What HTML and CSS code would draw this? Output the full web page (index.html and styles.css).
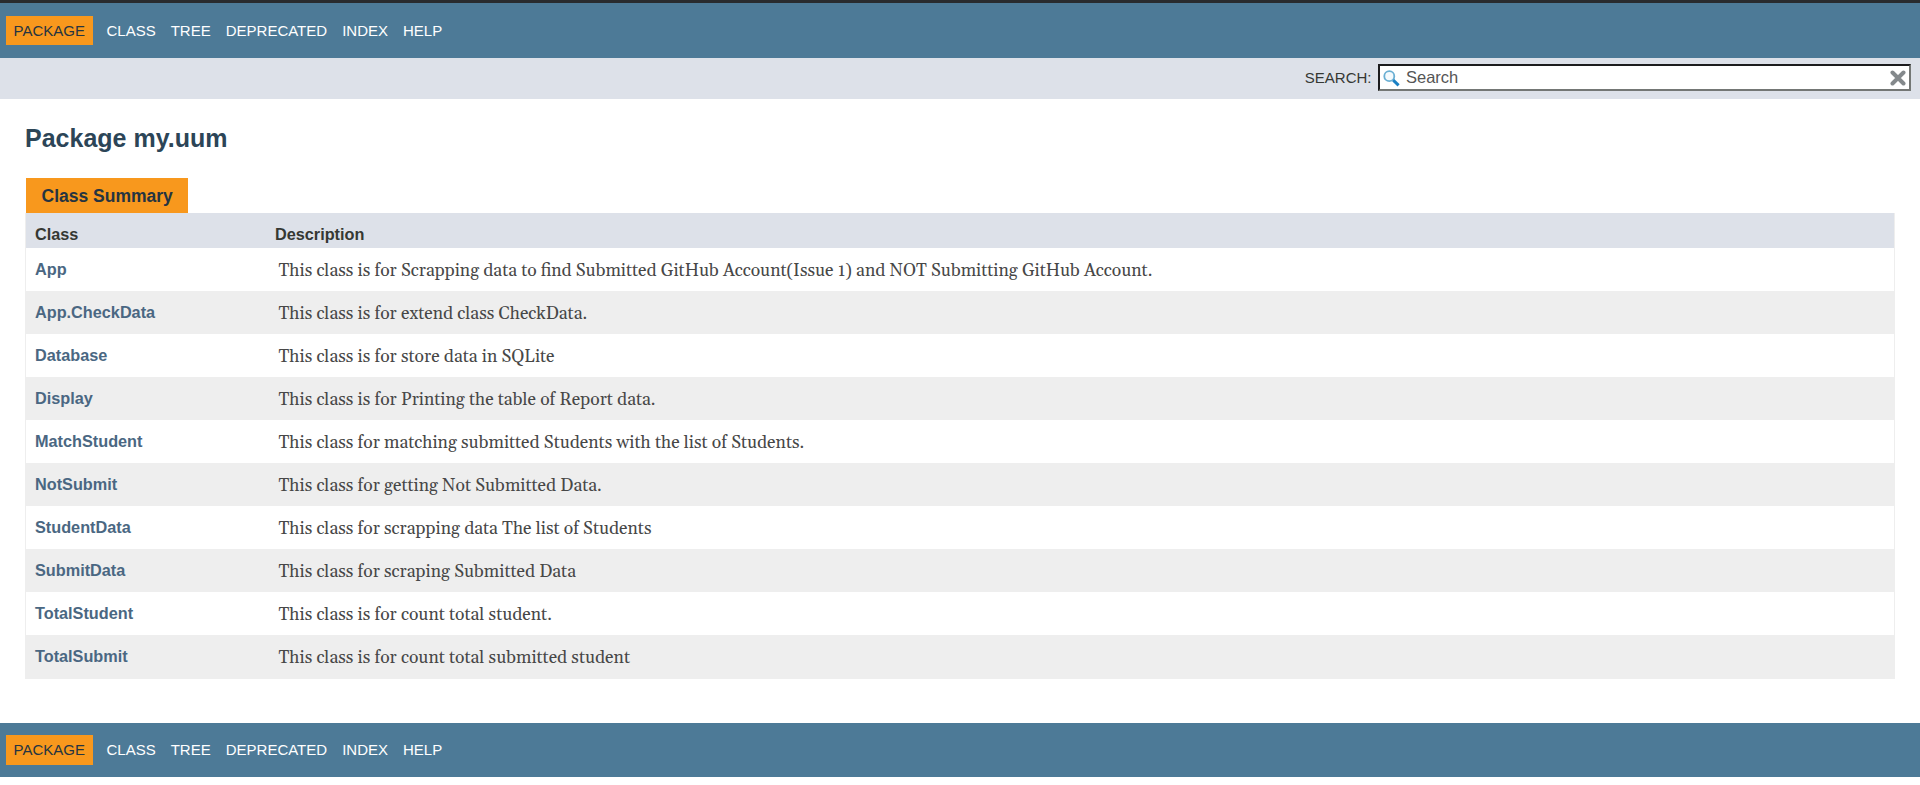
FILE: index.html
```html
<!DOCTYPE html>
<html lang="en">
<head>
<meta charset="utf-8">
<title>my.uum</title>
<link rel="stylesheet" href="styles.css">
</head>
<body>
<header>
<nav class="top-nav">
<ul class="nav-list"><li class="active">PACKAGE</li><li>CLASS</li><li>TREE</li><li>DEPRECATED</li><li>INDEX</li><li>HELP</li></ul>
</nav>
<div class="sub-nav">
<label class="search-label" for="search">SEARCH:</label>
<div class="search-box">
<svg class="glass" width="18" height="18" viewBox="0 0 18 18"><circle cx="6.3" cy="6.2" r="5" fill="#f4fafd" stroke="#6aafd3" stroke-width="1.8"/><path d="M10.2 10.2l5.4 5.2" stroke="#1a80c4" stroke-width="3"/></svg>
<input class="search-input" id="search" type="text" placeholder="Search">
<svg class="clear" width="16" height="16" viewBox="0 0 16 16"><path d="M2.5 2.5l11 11M13.5 2.5l-11 11" stroke="#84898c" stroke-width="4" stroke-linecap="round"/></svg>
</div>
</div>
</header>
<main class="content">
<h1 class="title">Package my.uum</h1>
<div class="caption">Class Summary</div>
<div class="summary">
<div class="row head"><span>Class</span><span>Description</span></div>
<div class="row"><a class="name">App</a><span class="desc">This class is for Scrapping data to find Submitted GitHub Account(Issue 1) and NOT Submitting GitHub Account.</span></div>
<div class="row alt"><a class="name">App.CheckData</a><span class="desc">This class is for extend class CheckData.</span></div>
<div class="row"><a class="name">Database</a><span class="desc">This class is for store data in SQLite</span></div>
<div class="row alt"><a class="name">Display</a><span class="desc">This class is for Printing the table of Report data.</span></div>
<div class="row"><a class="name">MatchStudent</a><span class="desc">This class for matching submitted Students with the list of Students.</span></div>
<div class="row alt"><a class="name">NotSubmit</a><span class="desc">This class for getting Not Submitted Data.</span></div>
<div class="row"><a class="name">StudentData</a><span class="desc">This class for scrapping data The list of Students</span></div>
<div class="row alt"><a class="name">SubmitData</a><span class="desc">This class for scraping Submitted Data</span></div>
<div class="row"><a class="name">TotalStudent</a><span class="desc">This class is for count total student.</span></div>
<div class="row alt"><a class="name">TotalSubmit</a><span class="desc">This class is for count total submitted student</span></div>
</div>
</main>
<footer>
<nav class="bottom-nav">
<ul class="nav-list"><li class="active">PACKAGE</li><li>CLASS</li><li>TREE</li><li>DEPRECATED</li><li>INDEX</li><li>HELP</li></ul>
</nav>
</footer>
</body>
</html>
```
FILE: styles.css
```css
* { box-sizing: border-box; }
body {
  margin: 0;
  background: #fff;
  color: #353833;
  font-family: "Liberation Sans", Arial, sans-serif;
  overflow: hidden;
}
.top-nav {
  height: 58px;
  padding-top: 13px;
  border-top: 3px solid #292b2e;
  background: #4d7a97;
}
.bottom-nav {
  height: 54px;
  padding-top: 12px;
  background: #4d7a97;
}
.nav-list {
  display: flex;
  margin: 0;
  padding: 0 0 0 6px;
  list-style: none;
  color: #fff;
  font-size: 15px;
}
.nav-list li {
  height: 29px;
  margin-right: 15px;
  line-height: 29px;
}
.nav-list .active {
  width: 87px;
  margin-right: 13.5px;
  padding-left: 7.5px;
  background: #f8981d;
  color: #253441;
}
.bottom-nav .active { height: 30px; }
.sub-nav {
  display: flex;
  justify-content: flex-end;
  height: 41px;
  padding: 6px 9px 0 0;
  background: #dde1e9;
}
.search-label {
  margin-right: 6.5px;
  font-size: 15px;
  line-height: 27px;
}
.search-box {
  display: flex;
  width: 533px;
  height: 27px;
  border: 2px solid;
  border-color: #1c1c1e #747775 #747775 #1c1c1e;
  background: #fff;
}
.glass { margin: 4px 0 0 3px; }
.search-input {
  flex: 1;
  min-width: 0;
  padding: 0 0 0 5px;
  border: 0;
  background: none;
  font: 16.5px "Liberation Sans", Arial, sans-serif;
}
.search-input::placeholder { color: #555; }
.clear { margin: 4px 3.5px 0 0; }
.content { padding: 25px 25px 44px; }
.title {
  height: 28px;
  margin: 0 0 26px;
  color: #2c4557;
  font-size: 25px;
  line-height: 28px;
}
.caption {
  width: 162px;
  height: 35px;
  margin-left: 1px;
  padding-left: 15.5px;
  background: #f8981d;
  color: #253441;
  font-size: 17.5px;
  font-weight: bold;
  line-height: 37px;
}
.summary {
  border: 1px solid #eee;
  border-top: 0;
}
.row {
  display: grid;
  grid-template-columns: 243.5px 1fr;
  height: 43px;
  padding-left: 9px;
  line-height: 43px;
}
.alt { background: #eee; }
.head {
  grid-template-columns: 240px 1fr;
  height: 35px;
  padding-top: 4px;
  background: #dde1e9;
  font-size: 16.25px;
  font-weight: bold;
  line-height: 35px;
}
.name {
  color: #4a6782;
  font-size: 16.25px;
  font-weight: bold;
}
.desc {
  color: #474747;
  font-family: Gelasio, Georgia, "Liberation Serif", serif;
  font-size: 17.5px;
  line-height: 46px;
  white-space: nowrap;
}
```
